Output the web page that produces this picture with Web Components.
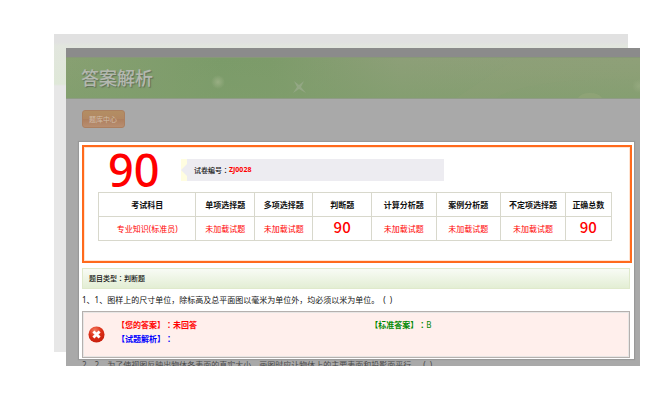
<!DOCTYPE html>
<html lang="zh-CN">
<head>
<meta charset="utf-8">
<title>答案解析</title>
<style>
body { margin: 0; background: #fff; color: #111; font: 8px/14px "Noto Sans", "Noto Sans CJK SC", sans-serif; text-spacing-trim: space-all; }
.colon { font-family: "Noto Sans CJK TC", sans-serif; }
</style>
</head>
<body>
<exam-stage>
  <page-banner slot="banner">答案解析</page-banner>
  <nav-button>题库中心</nav-button>
  <result-panel>
    <score-card score="90" number="ZJ0028"></score-card>
    <category-bar>题目类型<span class="colon" lang="zh-TW">：</span>判断题</category-bar>
    <question-text>1、1、图样上的尺寸单位，除标高及总平面图以毫米为单位外，均必须以米为单位。&nbsp; (&nbsp; )</question-text>
    <answer-box><span slot="mine">【您的答案】<span class="colon" lang="zh-TW">：</span>未回答</span><span slot="notes">【试题解析】<span class="colon" lang="zh-TW">：</span></span><span slot="right">B</span></answer-box>
  </result-panel>
  <question-text class="next" slot="next">2、2、为了使视图反映出物体各表面的真实大小，画图时应让物体上的主要表面和投影面平行。&nbsp; (&nbsp; )</question-text>
</exam-stage>

<script>
const define = (name, html, setup) => {
  const template = document.createElement('template');
  template.innerHTML = html;
  customElements.define(name, class extends HTMLElement {
    constructor() {
      super();
      this.attachShadow({ mode: 'open' }).append(template.content.cloneNode(true));
    }
    connectedCallback() { if (setup) setup(this, this.shadowRoot); }
  });
};

define('exam-stage', `
<style>
  :host { display: grid; padding: 34px 30px 34px 54px; }
  .back, .front { grid-area: 1 / 1; }
  .back { margin: 0 12px 14px 0;
    background: linear-gradient(#e1e1e1 8px, #e2e6de 12px, #dfe8d8 50px, #e7e7e7 52px); }
  .front { margin: 14px 0 0 12px; border-top: 9px solid #8b8b8b; background: #a9a9a9; overflow: hidden; }
  main { padding: 11px 6px 0 13px; }
  .next { height: 7px; overflow: hidden; padding-left: 16px; opacity: .65; }
</style>
<div class="back"></div>
<div class="front">
  <slot name="banner"></slot>
  <main><slot></slot></main>
  <div class="next"><slot name="next"></slot></div>
</div>`);

define('page-banner', `
<style>
  :host { display: block; }
  header { position: relative; display: flex; align-items: center; height: 42px; box-sizing: border-box; padding: 0 0 2px 15px;
    background: linear-gradient(#8fa07a00, #7f9e6c99), linear-gradient(90deg, #88a072, #7b9b69 27%, #7d9b6a 36%, #8d9f78 58%, #8fa079);
    border-top: 1px solid #889878; border-bottom: 1px solid #8f9b86; }
  h1 { margin: 0; font: 500 18px/24px "Noto Sans CJK SC", sans-serif; color: #b4b8b0; text-shadow: 1px 1px 1px #5f6f58; }
  svg { position: absolute; inset: 0; width: 100%; height: 100%; }
</style>
<header><h1><slot></slot></h1>
  <svg viewBox="0 0 574 40" preserveAspectRatio="none" aria-hidden="true">
    <defs><radialGradient id="g"><stop stop-color="#a5b68e" stop-opacity=".7"/><stop offset="1" stop-color="#a5b68e" stop-opacity="0"/></radialGradient></defs>
    <circle cx="152" cy="24" r="7" fill="url(#g)"/>
    <path d="M228 23l5 4 5-4-3 6 5 6-7-4-6 4 4-6z" fill="#93a784"/>
    <path d="M512 40a13 8 0 0 1 24 0z" fill="#94a77a" opacity=".6"/>
    <circle cx="573" cy="28" r="7" fill="url(#g)" opacity=".6"/>
    <path d="M390 40L450 0h124v22Q470 18 430 40z" fill="#91a07a" opacity=".2"/>
  </svg>
</header>`);

define('nav-button', `
<style>
  :host { display: block; padding-left: 3px; margin-bottom: 14px; }
  button { display: block; height: 18px; padding: 0 7px 0 6px; border: 1px solid #ac8060; border-radius: 3px;
    background: linear-gradient(#b38e63, #b28762 50%, #ae7f5e 52%, #b88e70); color: #d0bda9;
    font: 7px/16px "Noto Sans CJK SC", sans-serif; }
</style>
<button type="button"><slot></slot></button>`);

define('result-panel', `
<style>
  :host { display: block; background: #fff; padding: 3px 4px 1px 3px; box-shadow: 0 0 1px 1px #999; }
</style>
<slot></slot>`);

define('score-card', `
<style>
  :host { display: block; border: 2px solid #ff6a1c; margin-right: -2px; padding: 0 18px 20px 14px; outline: 1px solid #ffe4d2; outline-offset: -3px; }
  .top { display: flex; height: 45px; }
  .score { width: 83px; padding-left: 10px; box-sizing: border-box; font: 500 45px/45px "Noto Sans", sans-serif; color: #f00; }
  .number { display: flex; align-items: center; align-self: flex-start; height: 22px; width: 263px; margin-top: 12px; background: #edecf1; font-size: 7px; font-weight: 500; }
  .number svg { width: 6px; height: 22px; margin-right: 7px; }
  .number b { color: #f00; }
  .colon { font-family: "Noto Sans CJK TC", sans-serif; }
  table { width: 100%; table-layout: fixed; border-collapse: collapse; }
  th, td { border: 1px solid #d8d8cc; padding: 0; height: 23px; text-align: center; line-height: 14px; white-space: nowrap; }
  td { color: #f00; }
  td.hit { height: 20px; padding-bottom: 3px; font: 500 15px/14px "Noto Sans CJK SC", sans-serif; }
</style>
<div class="top">
  <div class="score"></div>
  <div class="number">
    <svg viewBox="0 0 6 22" aria-hidden="true"><path d="M0 0h6v5L0 11l6 6v5H0z" fill="#fffde0"/></svg>
    <span>试卷编号<span class="colon" lang="zh-TW">：</span></span><b></b>
  </div>
</div>
<table>
  <colgroup><col style="width:19%"><col style="width:11.4%"><col style="width:11.4%"><col style="width:11.4%"><col style="width:12.6%"><col style="width:12.6%"><col style="width:12.6%"><col></colgroup>
  <thead><tr><th>考试科目</th><th>单项选择题</th><th>多项选择题</th><th>判断题</th><th>计算分析题</th><th>案例分析题</th><th>不定项选择题</th><th>正确总数</th></tr></thead>
  <tbody><tr><td>专业知识(标准员)</td><td>未加载试题</td><td>未加载试题</td><td class="hit"></td><td>未加载试题</td><td>未加载试题</td><td>未加载试题</td><td class="hit"></td></tr></tbody>
</table>`, (host, root) => {
  root.querySelector('.score').textContent = host.getAttribute('score');
  root.querySelector('.number b').textContent = host.getAttribute('number');
  root.querySelectorAll('.hit').forEach(cell => { cell.textContent = host.getAttribute('score'); });
});

define('category-bar', `
<style>
  :host { display: block; margin-top: 5px; padding: 0 6px; border: 1px solid #dfe9cb;
    background: linear-gradient(#f8fbf5, #e3eed4); font-size: 7px; font-weight: 500; line-height: 18px; }
</style>
<slot></slot>`);

define('question-text', `
<style>
  :host { display: block; padding: 4px 0; line-height: 14px; white-space: nowrap; }
  :host(.next) { padding: 0; line-height: 12px; }
</style>
<slot></slot>`);

define('answer-box', `
<style>
  :host { display: grid; grid-template-columns: 34px 46fr 47fr; align-items: start; padding: 6px 0 11px; border: 1px solid #b5b0ae;
    outline: 1px solid #e8e6e5; outline-offset: -2px; background: #ffefec; font-weight: 700; }
  svg { width: 17px; height: 17px; margin: 8px 0 0 5px; }
  .mine { color: #f00; }
  .notes { color: #00f; }
  .right { color: #080; }
  .right b { font-weight: 400; }
  .colon { font-family: "Noto Sans CJK TC", sans-serif; }
</style>
<svg viewBox="0 0 18 18" role="img" aria-label="错误">
  <defs><radialGradient id="r" cx=".4" cy=".25" r=".8"><stop stop-color="#f47b60"/><stop offset=".5" stop-color="#dc3018"/><stop offset="1" stop-color="#c41c0c"/></radialGradient></defs>
  <circle cx="9" cy="9" r="8.5" fill="url(#r)"/>
  <path d="M5.7 5.7l6.6 6.6M12.3 5.7l-6.6 6.6" stroke="#fff" stroke-width="3"/>
</svg>
<div><div class="mine"><slot name="mine"></slot></div><div class="notes"><slot name="notes"></slot></div></div>
<div class="right">【标准答案】<span class="colon" lang="zh-TW">：</span><b><slot name="right"></slot></b></div>`);
</script>
</body>
</html>
